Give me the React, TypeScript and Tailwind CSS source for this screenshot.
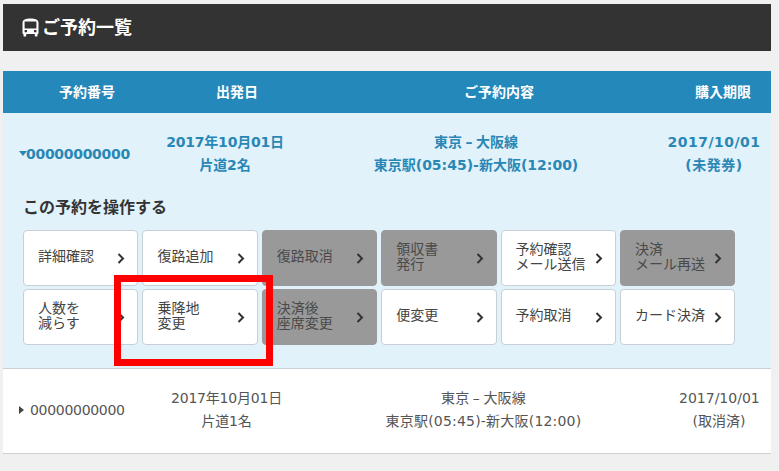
const font = "font-['DejaVu_Sans','Noto_Sans_CJK_JP',sans-serif]";

function Chevron() {
  return (
    <svg width="8" height="11" viewBox="0 0 8 11" className="shrink-0">
      <path d="M1.5 1 L6 5.5 L1.5 10" fill="none" stroke="#333" strokeWidth="2" />
    </svg>
  );
}

function Btn({ lines, off }: { lines: string[]; off?: boolean }) {
  return (
    <div
      className={`w-[115.4px] h-[56px] rounded-[4px] border flex items-center justify-between pl-[14px] pr-[12px] text-[14px] leading-[15.5px] ${
        off ? "bg-[#999999] text-[#4a4a4a] border-[#999999]" : "bg-white text-[#444444] border-[#c8d0d6]"
      }`}
    >
      <span className="whitespace-nowrap pb-[2px]">
        {lines.map((l) => (
          <span key={l} className="block">
            {l}
          </span>
        ))}
      </span>
      <Chevron />
    </div>
  );
}

function Bus() {
  return (
    <svg width="17" height="19" viewBox="0 0 17 19">
      <path
        d="M8.5 0.5 C13 0.5 16.5 1.5 16.5 5 V15 C16.5 15.6 16 16 15.5 16 V18 C15.5 18.8 12.8 18.8 12.8 18 V16 H4.2 V18 C4.2 18.8 1.5 18.8 1.5 18 V16 C1 16 0.5 15.6 0.5 15 V5 C0.5 1.5 4 0.5 8.5 0.5 Z M2.6 3.5 V10.5 H14.4 V3.5 Z M2.6 12 V14.2 H5 V12 Z M12 12 V14.2 H14.4 V12 Z"
        fill="#ffffff"
        fillRule="evenodd"
      />
    </svg>
  );
}

function Route() {
  return (
    <>
      東京
      <span className="inline-block w-[14px] text-center">–</span>
      大阪線
    </>
  );
}

export default function App() {
  return (
    <div className={`${font} relative w-[779px] h-[471px] overflow-hidden bg-[#f0f0f0] pt-[4px] pl-[3px]`}>
      <div className="w-[768px] h-[47px] bg-[#333333] flex items-center gap-[3px] pl-[19px] text-white font-bold text-[18px]">
        <Bus />
        <span>ご予約一覧</span>
      </div>

      <div className="w-[768px] mt-[20px]">
        <div className="h-[42px] bg-[#2488bb] text-white font-bold text-[14px] flex items-center">
          <span className="w-[168px] text-center">予約番号</span>
          <span className="w-[132px] text-center">出発日</span>
          <span className="w-[392px] text-center">ご予約内容</span>
          <span className="w-[76px] text-center pr-[20px] whitespace-nowrap">購入期限</span>
        </div>

        <div className="h-[256px] bg-[#e1f2fb] border-b border-[#c8d0d6]">
          <div className="flex items-center pt-[18px] text-[#2a87b5] font-bold text-[14px] leading-[23px]">
            <span className="w-[162px] pl-[16px] flex items-center">
              <span className="w-0 h-0 border-l-[4px] border-r-[4px] border-t-[5px] border-l-transparent border-r-transparent border-t-[#2a87b5] -mt-[1px] mr-[-1px]"></span>
              <span className="tracking-[-0.3px]">00000000000</span>
            </span>
            <span className="w-[120px] text-center tracking-[-0.2px]">
              2017年10月01日
              <br />
              片道2名
            </span>
            <span className="w-[382px] text-center">
              <Route />
              <br />
              東京駅(05:45)-新大阪(12:00)
            </span>
            <span className="w-[94px] text-center tracking-[0.5px]">
              2017/10/01
              <br />
              (未発券)
            </span>
          </div>

          <div className="mt-[20px] pl-[20px] text-[16px] font-bold text-[#333333] leading-[22px]">この予約を操作する</div>

          <div className="pl-[20px] mt-[11px] flex flex-col gap-[3px]">
            <div className="flex gap-[4px]">
              <Btn lines={["詳細確認"]} />
              <Btn lines={["復路追加"]} />
              <Btn lines={["復路取消"]} off />
              <Btn lines={["領収書", "発行"]} off />
              <Btn lines={["予約確認", "メール送信"]} />
              <Btn lines={["決済", "メール再送"]} off />
            </div>
            <div className="flex gap-[4px]">
              <Btn lines={["人数を", "減らす"]} />
              <Btn lines={["乗降地", "変更"]} />
              <Btn lines={["決済後", "座席変更"]} off />
              <Btn lines={["便変更"]} />
              <Btn lines={["予約取消"]} />
              <Btn lines={["カード決済"]} />
            </div>
          </div>
        </div>

        <div className="h-[85px] bg-white border-b border-[#d0d0d0] flex items-center pb-[2px] text-[#555555] text-[14px] leading-[23px]">
          <span className="w-[162px] pl-[16px] flex items-center gap-[6px]">
            <span className="w-0 h-0 border-t-[4px] border-b-[4px] border-l-[5px] border-t-transparent border-b-transparent border-l-[#444444]"></span>
            <span className="tracking-[-0.3px]">00000000000</span>
          </span>
          <span className="w-[123px] text-center tracking-[-0.2px]">
            2017年10月01日
            <br />
            片道1名
          </span>
          <span className="w-[391px] text-center tracking-[0.2px]">
            <Route />
            <br />
            東京駅(05:45)-新大阪(12:00)
          </span>
          <span className="w-[80px] text-center">
            2017/10/01
            <br />
            (取消済)
          </span>
        </div>
      </div>

      <div className="absolute left-[114px] top-[275px] w-[159px] h-[91px] border-[7px] border-[#ff0000]"></div>
    </div>
  );
}
